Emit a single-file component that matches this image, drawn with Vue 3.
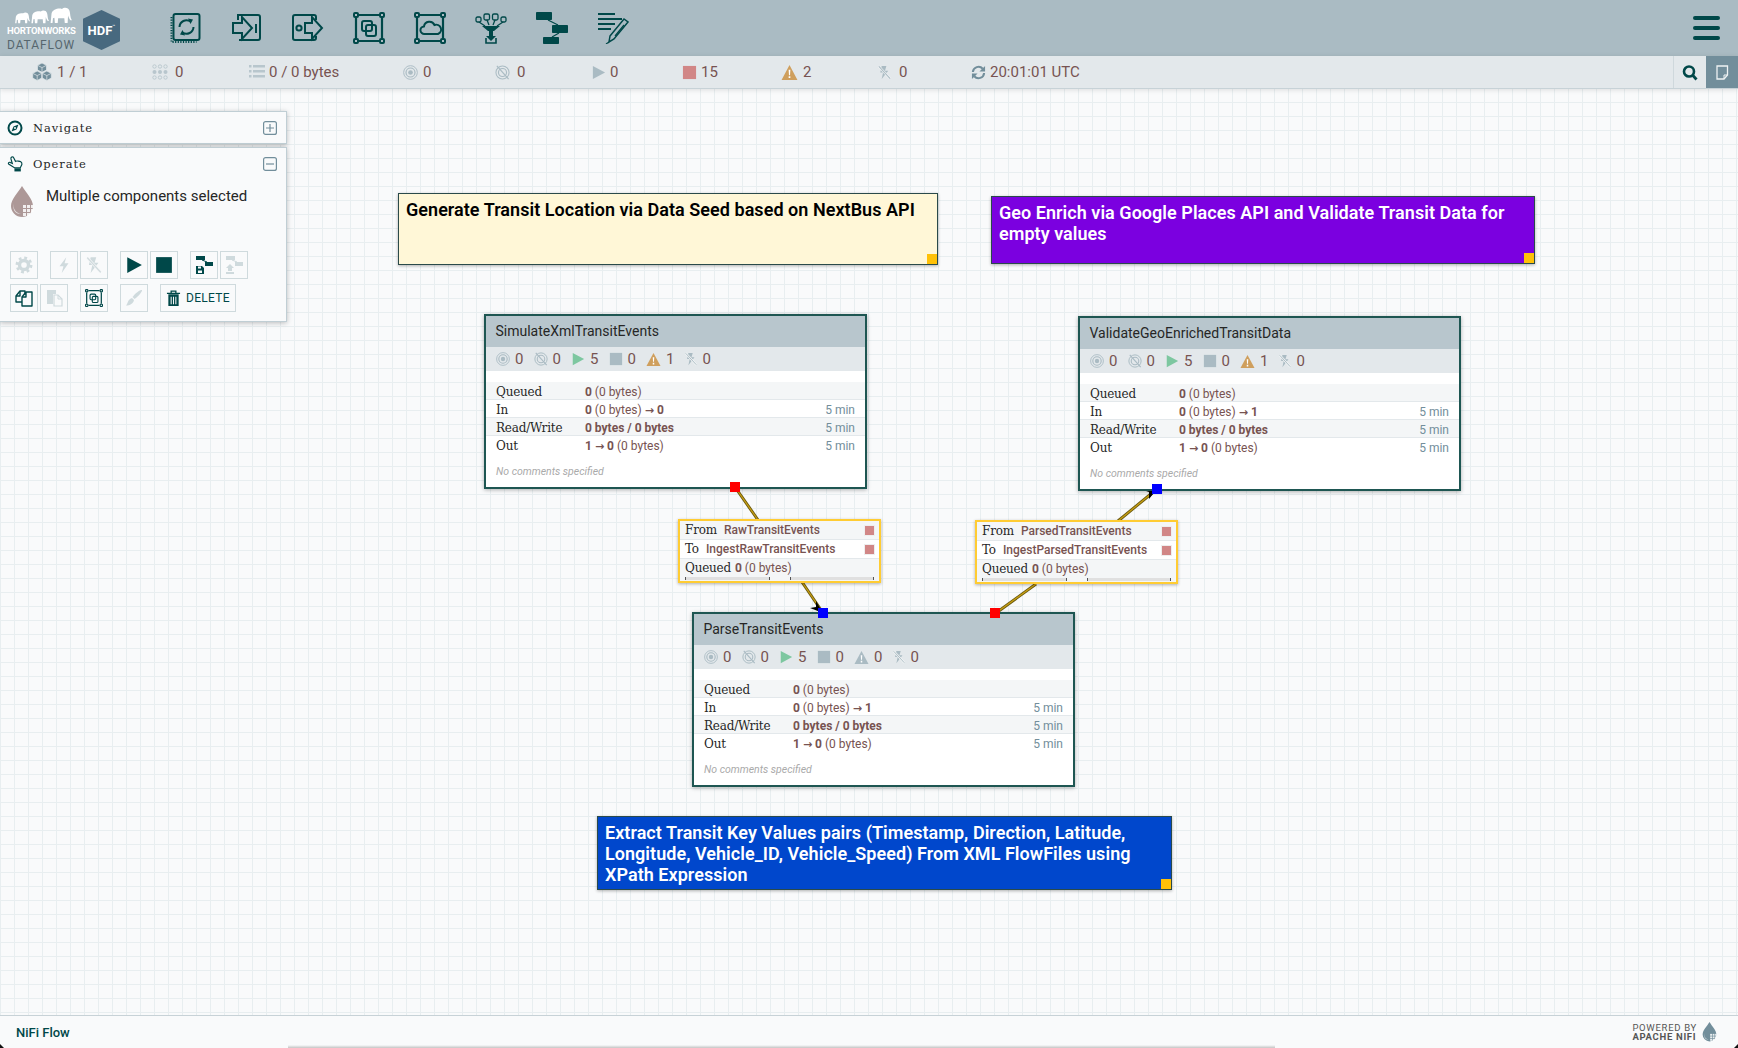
<script setup>
const tools = ['proc', 'inport', 'outport', 'group', 'remote', 'funnel', 'template', 'label']

const statusItems = [
  { icon: 'cubes', text: '1 / 1', w: 120, gap: 5 },
  { icon: 'dots', text: '0', w: 97, gap: 7 },
  { icon: 'list', text: '0 / 0 bytes', w: 154, gap: 4 },
  { icon: 'target', text: '0', w: 92, gap: 5 },
  { icon: 'target-off', text: '0', w: 96, gap: 7 },
  { icon: 'play', text: '0', w: 91, gap: 4 },
  { icon: 'stop', text: '15', w: 99, gap: 4, cls: 'red' },
  { icon: 'warn', text: '2', w: 96, gap: 5, cls: 'warned' },
  { icon: 'bolt-off', text: '0', w: 94, gap: 7 },
  { icon: 'refresh', text: '20:01:01 UTC', w: 160, gap: 4, cls: 'steel' }
]

const labels = [
  { cls: 'l-yellow', text: 'Generate Transit Location via Data Seed based on NextBus API', x: 398, y: 104, w: 540, h: 72 },
  { cls: 'l-purple', text: 'Geo Enrich via Google Places API and Validate Transit Data for empty values', x: 991, y: 107, w: 544, h: 68 },
  { cls: 'l-blue', text: 'Extract Transit Key Values pairs (Timestamp, Direction, Latitude, Longitude, Vehicle_ID, Vehicle_Speed) From XML FlowFiles using XPath Expression', x: 597, y: 727, w: 575, h: 74 }
]

const processors = [
  { name: 'SimulateXmlTransitEvents', x: 484, y: 225, warn: 1, warnCls: 'amber', in: '0', out: '0' },
  { name: 'ValidateGeoEnrichedTransitData', x: 1078, y: 227, warn: 1, warnCls: 'amber', in: '1', out: '0' },
  { name: 'ParseTransitEvents', x: 692, y: 523, warn: 0, warnCls: 'plain', in: '1', out: '0' }
]

const conns = [
  { x: 678, y: 430, from: 'RawTransitEvents', to: 'IngestRawTransitEvents' },
  { x: 975, y: 431, from: 'ParsedTransitEvents', to: 'IngestParsedTransitEvents' }
]

const ports = [
  { x: 730, y: 393, c: 'red' },
  { x: 818, y: 519, c: 'blue' },
  { x: 990, y: 519, c: 'red' },
  { x: 1152, y: 395, c: 'blue' }
]

const row1 = [
  { icon: 'gear', off: true },
  { icon: 'bolt', off: true, sp: true },
  { icon: 'bolt-off', off: true },
  { icon: 'play', sp: true },
  { icon: 'stop' },
  { icon: 'tpl-save', sp: true },
  { icon: 'tpl-up', off: true }
]
const row2 = [
  { icon: 'copy' },
  { icon: 'paste', off: true },
  { icon: 'group', sp: true },
  { icon: 'brush', off: true, sp: true }
]
</script>

<template>
  <div class="page">
    <svg class="defs" aria-hidden="true">
      <defs>
        <symbol id="i-proc" viewBox="0 0 32 32">
          <g fill="none" stroke="currentColor" stroke-width="2">
            <rect x="3.5" y="2" width="26" height="26" rx="2" />
            <path d="M1.5 5v25h25" stroke-dasharray="1.2 1.4" />
            <path d="M9.5 15a7 7 0 0 1 11-5.5" />
            <path d="M23.5 15a7 7 0 0 1-11 5.5" />
          </g>
          <path d="M18 6.5l5 1-2.5 4.5zM15 23.500l-5-1 2.500-4.500z" fill="currentColor" />
        </symbol>
        <symbol id="i-inport" viewBox="0 0 32 32">
          <g fill="none" stroke="currentColor" stroke-width="2">
            <path d="M7 8V3h20a2 2 0 0 1 2 2v21a2 2 0 0 1-2 2H8" />
            <path d="M2 11h9V5l10 11-10 11v-6H2z" />
            <path d="M25 12v9" />
          </g>
        </symbol>
        <symbol id="i-outport" viewBox="0 0 32 32">
          <g fill="none" stroke="currentColor" stroke-width="2">
            <path d="M24 8V5a2 2 0 0 0-2-2H3a2 2 0 0 0-2 2v21a2 2 0 0 0 2 2h19a2 2 0 0 0 2-2v-2" />
            <circle cx="7" cy="16" r="2.6" />
            <path d="M13 11h7V5l10 11-10 11v-6h-7z" />
          </g>
        </symbol>
        <symbol id="i-group" viewBox="0 0 32 32">
          <g fill="none" stroke="currentColor" stroke-width="2">
            <rect x="1" y="1" width="4" height="4" rx="1" />
            <rect x="27" y="1" width="4" height="4" rx="1" />
            <rect x="1" y="27" width="4" height="4" rx="1" />
            <rect x="27" y="27" width="4" height="4" rx="1" />
            <path d="M6 3h20M6 29h20M3 6v20M29 6v20" stroke-width="2.2" />
            <rect x="9" y="9" width="10" height="10" rx="2" />
            <rect x="13" y="13" width="10" height="11" rx="2" />
          </g>
        </symbol>
        <symbol id="i-remote" viewBox="0 0 32 32">
          <g fill="none" stroke="currentColor" stroke-width="2">
            <rect x="1" y="1" width="4" height="4" rx="1" />
            <rect x="27" y="1" width="4" height="4" rx="1" />
            <rect x="1" y="27" width="4" height="4" rx="1" />
            <rect x="27" y="27" width="4" height="4" rx="1" />
            <path d="M6 3h20M6 29h20M3 6v20M29 6v20" stroke-width="2.2" />
            <path d="M10.5 22a3.8 3.8 0 0 1-.5-7.6 5.5 5.5 0 0 1 10.500-1.400 4.500 4.500 0 0 1 3.500 9z" />
          </g>
        </symbol>
        <symbol id="i-funnel" viewBox="0 0 32 32">
          <g fill="none" stroke="currentColor" stroke-width="1.300">
            <rect x="1" y="5" width="5" height="5" rx="1.500" />
            <rect x="9" y="2" width="5.500" height="6" rx="1.500" />
            <rect x="17.500" y="2" width="5.500" height="6" rx="1.500" />
            <rect x="26" y="5" width="5" height="5" rx="1.500" />
            <path d="M4 10l6 4M12 8l2 5M20 8l-2 5M28 10l-6 4" />
            <path d="M11 26v5h10v-5" stroke-width="1.600" />
          </g>
          <path d="M7 14h18l-6 5h-6z" fill="currentColor" />
          <path d="M14 19h4v5h3l-5 5-5-5h3z" fill="currentColor" />
        </symbol>
        <symbol id="i-template" viewBox="0 0 32 32">
          <g fill="currentColor">
            <rect x="0" y="0" width="16" height="8" rx="0.800" />
            <rect x="16" y="13" width="16" height="8" rx="0.800" />
            <rect x="7" y="25" width="16" height="7" rx="0.800" />
          </g>
          <path d="M12 8l10 5M23 21l-7 4" stroke="currentColor" stroke-width="1.200" fill="none" />
        </symbol>
        <symbol id="i-label" viewBox="0 0 32 32">
          <g fill="none" stroke="currentColor">
            <path d="M1 2h17M1 7h24M1 12h17M1 17h13" stroke-width="2.200" />
            <path d="M13 24L27 7l4 3-14 17-5 3z" stroke-width="1.500" />
            <path d="M18 24l9-11M12 30l-3 2" stroke-width="1.200" />
          </g>
        </symbol>

        <symbol id="i-cubes" viewBox="0 0 20 20">
          <g fill="currentColor" stroke="#e3e8eb" stroke-width="0.700">
            <path d="M10 1l4.500 2.300v4.700L10 10.300 5.500 8V3.300z" />
            <path d="M5.200 9l4.500 2.300V16l-4.500 2.500L.7 16v-4.700z" />
            <path d="M14.800 9l4.500 2.300V16l-4.500 2.500-4.500-2.500v-4.700z" />
          </g>
          <path d="M5.500 3.300L10 5.600l4.500-2.300M10 5.600V10M.7 11.300l4.500 2.300 4.500-2.300M5.200 13.600v4.900M10.300 11.300l4.500 2.300 4.500-2.300M14.800 13.600v4.900" fill="none" stroke="#e3e8eb" stroke-width="0.700" />
        </symbol>
        <symbol id="i-dots" viewBox="0 0 16 16">
          <g fill="none" stroke="currentColor" stroke-width="0.900">
            <circle cx="2.500" cy="2.500" r="1.700" /><circle cx="8" cy="2.500" r="1.700" /><circle cx="13.500" cy="2.500" r="1.700" />
            <circle cx="2.500" cy="13.500" r="1.700" /><circle cx="8" cy="13.500" r="1.700" /><circle cx="13.500" cy="13.500" r="1.700" />
          </g>
          <g fill="currentColor">
            <circle cx="2.500" cy="8" r="2" /><circle cx="8" cy="8" r="2" /><circle cx="13.500" cy="8" r="2" />
          </g>
        </symbol>
        <symbol id="i-list" viewBox="0 0 16 16">
          <g fill="currentColor">
            <rect x="0" y="1" width="2.500" height="2.500" /><rect x="4" y="1" width="12" height="2.500" />
            <rect x="0" y="6" width="2.500" height="2.500" /><rect x="4" y="6" width="12" height="2.500" />
            <rect x="0" y="11" width="2.500" height="2.500" /><rect x="4" y="11" width="12" height="2.500" />
          </g>
        </symbol>
        <symbol id="i-target" viewBox="0 0 16 16">
          <g fill="none" stroke="currentColor">
            <circle cx="8" cy="8" r="7.300" stroke-width="1" />
            <circle cx="8" cy="8" r="4.800" stroke-width="1.300" />
          </g>
          <circle cx="8" cy="8" r="2.500" fill="currentColor" />
        </symbol>
        <symbol id="i-target-off" viewBox="0 0 16 16">
          <g fill="none" stroke="currentColor">
            <circle cx="8" cy="8" r="7" stroke-width="1.100" />
            <circle cx="8" cy="8" r="4.300" stroke-width="1.200" />
            <path d="M2 1l12.500 14" stroke-width="1.300" />
          </g>
        </symbol>
        <symbol id="i-play" viewBox="0 0 16 16"><path d="M2 1l13 7-13 7z" fill="currentColor" /></symbol>
        <symbol id="i-stop" viewBox="0 0 16 16"><rect x="1" y="1" width="14" height="14" fill="currentColor" /></symbol>
        <symbol id="i-warn" viewBox="0 0 16 16">
          <path d="M8 1l7.500 14H.5z" fill="currentColor" />
          <path d="M7.200 5.500h1.600l-.3 5h-1zM7.200 11.500h1.600v1.700H7.200z" fill="#fff" />
        </symbol>
        <symbol id="i-bolt-off" viewBox="0 0 16 16">
          <path d="M5 1L3.500 8h3L5 15l7-9H8.500L10 1z" fill="currentColor" />
          <path d="M2 1.500l12 13" stroke="#f3f5f6" stroke-width="2.400" fill="none" />
          <path d="M2 1.500l12 13" stroke="currentColor" stroke-width="1.100" fill="none" />
        </symbol>
        <symbol id="i-bolt" viewBox="0 0 16 16"><path d="M10 1L4 9h3.500L6 15l6-8.500H8.500z" fill="currentColor" /></symbol>
        <symbol id="i-refresh" viewBox="0 0 16 16">
          <g fill="none" stroke="currentColor" stroke-width="2.200">
            <path d="M2 7.500A6 6 0 0 1 12.500 4" />
            <path d="M14 8.500A6 6 0 0 1 3.500 12" />
          </g>
          <path d="M15 1v6h-6zM1 15V9h6z" fill="currentColor" />
        </symbol>
        <symbol id="i-search" viewBox="0 0 16 16">
          <circle cx="7" cy="7" r="5" fill="none" stroke="currentColor" stroke-width="2.600" />
          <path d="M10.500 10.500l4 4.500" stroke="currentColor" stroke-width="2.800" />
        </symbol>
        <symbol id="i-note" viewBox="0 0 16 16">
          <path d="M3 1.500h10.500v9L10 14.500H3z" fill="none" stroke="currentColor" stroke-width="1.300" />
          <path d="M13.500 10.500H10v4" fill="none" stroke="currentColor" stroke-width="1" />
        </symbol>
        <symbol id="i-compass" viewBox="0 0 16 16">
          <circle cx="8" cy="8" r="6.500" fill="none" stroke="currentColor" stroke-width="2" />
          <path d="M11.500 4.500L9.500 9.500 4.500 11.500 6.500 6.500z" fill="currentColor" />
          <circle cx="8" cy="8" r="1" fill="#f9fafb" />
        </symbol>
        <symbol id="i-hand" viewBox="0 0 16 16">
          <path d="M4.500 1.500c1-.6 1.600.2 2 1l1.500 3c1-.5 4-.3 5 .3 1 .6 1.200 1.600 1 2.700L12.500 11.500H7L1.500 8c-.7-1 .4-2 1.500-1.500L5 7.500 3.700 3.200c-.2-.7.2-1.300.8-1.700z" fill="none" stroke="currentColor" stroke-width="1.100" />
          <rect x="7" y="12" width="6" height="3" fill="currentColor" />
        </symbol>
        <symbol id="i-drop" viewBox="0 0 24 32">
          <path d="M12 0c4 7 11 13 11 20a11 11 0 0 1-22 0C1 13 8 7 12 0z" fill="currentColor" />
          <path d="M4 17c-1.500 5 1.500 10 7 11-6 .5-9-5-7-11z" fill="#fff" opacity="0.700" />
          <g fill="#fff" opacity="0.850">
            <rect x="13" y="19" width="3" height="3" /><rect x="17" y="19" width="3" height="3" />
            <rect x="13" y="23" width="3" height="3" /><rect x="17" y="23" width="3" height="3" />
            <rect x="21" y="19" width="2.500" height="3" /><rect x="21" y="23" width="2.500" height="3" />
            <rect x="13" y="27" width="3" height="3" /><rect x="17" y="27" width="3" height="3" />
          </g>
        </symbol>
        <symbol id="i-gear" viewBox="0 0 16 16">
          <circle cx="8" cy="8" r="4" fill="none" stroke="currentColor" stroke-width="3" />
          <circle cx="8" cy="8" r="6.300" fill="none" stroke="currentColor" stroke-width="2.400" stroke-dasharray="2.500 2.450" />
        </symbol>
        <symbol id="i-tpl-save" viewBox="0 0 18 18">
          <g fill="currentColor">
            <rect x="1" y="0" width="9" height="4" />
            <rect x="10" y="6" width="8" height="4" />
          </g>
          <path d="M7 4l5 2" stroke="currentColor" stroke-width="1" />
          <path d="M1 10h6l2 2v6H1z" fill="currentColor" />
          <rect x="3" y="10.500" width="3" height="2" fill="#f9fafb" />
          <rect x="3" y="14.500" width="4" height="2.500" fill="#f9fafb" />
        </symbol>
        <symbol id="i-tpl-up" viewBox="0 0 18 18">
          <g fill="currentColor">
            <rect x="1" y="0" width="9" height="4" />
            <rect x="10" y="6" width="8" height="4" />
            <path d="M5 8l4 4H7v3H3v-3H1z" />
            <rect x="1" y="16" width="8" height="2" />
          </g>
          <path d="M7 4l5 2" stroke="currentColor" stroke-width="1" />
        </symbol>
        <symbol id="i-copy" viewBox="0 0 18 18">
          <g fill="none" stroke="currentColor" stroke-width="1.400" stroke-linejoin="round">
            <path d="M7 13H1V7l4-5h5v4" />
            <path d="M5 2v5H1" />
            <path d="M7 8l4-5h6v14H7z" />
            <path d="M11 3v5H7" />
          </g>
        </symbol>
        <symbol id="i-paste" viewBox="0 0 18 18">
          <path d="M2 1h9v4H8v10H2z" fill="currentColor" />
          <path d="M9 6h4l4 4v7H9z" fill="none" stroke="currentColor" stroke-width="1.200" />
          <path d="M13 6v4h4" fill="none" stroke="currentColor" stroke-width="1" />
        </symbol>
        <symbol id="i-brush" viewBox="0 0 18 18">
          <path d="M17 1c.5 2-5 7.500-7.500 9L7.500 8c1.500-2.500 7.500-8 9.500-7z" fill="currentColor" />
          <path d="M7 9l2 2c-.5 3.500-4 5.500-8 5.500 2-1.500 1-5.500 6-7.500z" fill="currentColor" />
        </symbol>
        <symbol id="i-trash" viewBox="0 0 16 18">
          <path d="M1 3.500h14M5.500 3V1.200h5V3" fill="none" stroke="currentColor" stroke-width="1.400" />
          <path d="M2.500 4.500h11V17h-11z" fill="currentColor" />
          <path d="M5.500 7v8M8 7v8M10.500 7v8" stroke="#f9fafb" stroke-width="1.100" />
        </symbol>
        <symbol id="i-elephant" viewBox="0 0 24 18">
          <path d="M2 7C3 2.500 9 1 13 2c2-2 7-2 8 2 1 3 .5 7 2.500 10H22c-1.500-1.500-2-3.500-2.500-5L19 17h-3l-.5-5H9l-.5 5h-3L5 11.500 3.500 12 3 17H1z" fill="currentColor" />
        </symbol>
      </defs>
    </svg>

    <header class="topbar">
      <div class="logo">
        <div class="logo-text">
          <div class="herd">
            <svg class="el el-a"><use href="#i-elephant" /></svg>
            <svg class="el el-b"><use href="#i-elephant" /></svg>
            <svg class="el el-c"><use href="#i-elephant" /></svg>
          </div>
          <div class="hw">HORTONWORKS</div>
          <div class="df">DATAFLOW</div>
        </div>
        <div class="hex"><span>HDF</span><sup>™</sup></div>
      </div>
      <nav class="tools">
        <svg v-for="t in tools" :key="t" class="tool"><use :href="'#i-' + t" /></svg>
      </nav>
      <div class="burger"><i></i><i></i><i></i></div>
    </header>

    <div class="statusbar">
      <div class="stats">
        <div v-for="s in statusItems" :key="s.icon" class="stat" :class="s.cls" :style="{ width: s.w + 'px', gap: s.gap + 'px' }">
          <svg class="stat-ic" :class="'ic-' + s.icon"><use :href="'#i-' + s.icon" /></svg>
          <span>{{ s.text }}</span>
        </div>
      </div>
      <div class="status-actions">
        <div class="search"><svg><use href="#i-search" /></svg></div>
        <div class="note"><svg><use href="#i-note" /></svg></div>
      </div>
    </div>

    <main class="canvas">
      <svg class="links" width="1738" height="927">
        <g fill="none">
          <g stroke="#6b5a10" stroke-width="3">
            <path d="M735 398L758 431M802 493L823 524M996 524L1036 495M1118 432L1157 400" />
          </g>
          <g stroke="#c9a012" stroke-width="1.200">
            <path d="M735 398L758 431M802 493L823 524M996 524L1036 495M1118 432L1157 400" />
          </g>
        </g>
        <path d="M823 524l-13-5 6-1 0-6z" fill="#000" />
        <path d="M1157 400l-14 1 6 2 0 7z" fill="#000" />
      </svg>

      <div v-for="l in labels" :key="l.cls" class="note-label" :class="l.cls" :style="{ left: l.x + 'px', top: l.y + 'px', width: l.w + 'px', height: l.h + 'px' }">
        {{ l.text }}
        <i class="grip"></i>
      </div>

      <section v-for="p in processors" :key="p.name" class="proc" :style="{ left: p.x + 'px', top: p.y + 'px' }">
        <div class="proc-title">{{ p.name }}</div>
        <div class="proc-stats">
          <div class="ps"><svg class="ps-ic soft"><use href="#i-target" /></svg>0</div>
          <div class="ps"><svg class="ps-ic soft"><use href="#i-target-off" /></svg>0</div>
          <div class="ps"><svg class="ps-ic green"><use href="#i-play" /></svg>5</div>
          <div class="ps"><svg class="ps-ic block"><use href="#i-stop" /></svg>0</div>
          <div class="ps"><svg class="ps-ic" :class="p.warnCls"><use href="#i-warn" /></svg>{{ p.warn }}</div>
          <div class="ps"><svg class="ps-ic soft"><use href="#i-bolt-off" /></svg>0</div>
        </div>
        <div class="proc-rows">
          <div class="row alt"><span class="k">Queued</span><span class="v"><b>0</b> (0 bytes)</span></div>
          <div class="row"><span class="k">In</span><span class="v"><b>0</b> (0 bytes) <b class="arrow">→</b> <b>{{ p.in }}</b></span><span class="t">5 min</span></div>
          <div class="row alt"><span class="k">Read/Write</span><span class="v"><b>0 bytes / 0 bytes</b></span><span class="t">5 min</span></div>
          <div class="row"><span class="k">Out</span><span class="v"><b>1 <span class="arrow">→</span> {{ p.out }}</b> (0 bytes)</span><span class="t">5 min</span></div>
        </div>
        <div class="comments">No comments specified</div>
      </section>

      <section v-for="c in conns" :key="c.from" class="conn" :style="{ left: c.x + 'px', top: c.y + 'px' }">
        <div class="c-row alt"><span class="k">From</span><span class="name">{{ c.from }}</span><i class="sq"></i></div>
        <div class="c-row"><span class="k">To</span><span class="name">{{ c.to }}</span><i class="sq"></i></div>
        <div class="c-row alt last">
          <span class="k">Queued</span><span class="v"><b>0</b> (0 bytes)</span>
          <div class="bars"><i></i><i></i></div>
        </div>
      </section>

      <i v-for="(o, n) in ports" :key="n" class="port" :class="o.c" :style="{ left: o.x + 'px', top: o.y + 'px' }"></i>

      <aside class="panels">
        <div class="panel nav-panel">
          <svg class="panel-ic"><use href="#i-compass" /></svg>
          <span class="panel-title">Navigate</span>
          <span class="toggle">
            <svg viewBox="0 0 14 14"><rect x=".6" y=".6" width="12.800" height="12.800" rx="2" /><path d="M3 7h8M7 3v8" /></svg>
          </span>
        </div>
        <div class="panel op-panel">
          <div class="op-head">
            <svg class="panel-ic hand"><use href="#i-hand" /></svg>
            <span class="panel-title">Operate</span>
            <span class="toggle">
              <svg viewBox="0 0 14 14"><rect x=".6" y=".6" width="12.800" height="12.800" rx="2" /><path d="M3 7h8" /></svg>
            </span>
          </div>
          <div class="selection">
            <svg class="sel-drop"><use href="#i-drop" /></svg>
            <span>Multiple components selected</span>
          </div>
          <div class="btn-row">
            <button v-for="b in row1" :key="b.icon" class="btn" :class="{ off: b.off, sp: b.sp }"><svg><use :href="'#i-' + b.icon" /></svg></button>
          </div>
          <div class="btn-row">
            <button v-for="b in row2" :key="b.icon" class="btn" :class="{ off: b.off, sp: b.sp }"><svg><use :href="'#i-' + b.icon" /></svg></button>
            <button class="btn del"><svg class="trash"><use href="#i-trash" /></svg>DELETE</button>
          </div>
        </div>
      </aside>
    </main>

    <footer class="foot">
      <span class="crumb">NiFi Flow</span>
      <div class="powered">
        <div class="pw"><div>POWERED BY</div><div class="an">APACHE NIFI</div></div>
        <svg class="foot-drop"><use href="#i-drop" /></svg>
      </div>
      <i class="edge"></i>
      <i class="corner c-l"></i>
      <i class="corner c-r"></i>
    </footer>
  </div>
</template>

<style>
html, body { margin: 0; padding: 0; overflow: hidden; }
</style>

<style scoped>
.page {
  width: 1738px;
  height: 1048px;
  display: flex;
  flex-direction: column;
  overflow: hidden;
  font-family: Roboto, "Liberation Sans", sans-serif;
  background: #f9fafb;
  color: #262626;
}
.defs { position: absolute; width: 0; height: 0; }

/* top bar */
.topbar {
  height: 56px;
  flex: none;
  background: #aabbc3;
  display: flex;
  align-items: center;
  padding: 0 18px 0 7px;
  color: #004849;
}
.logo { display: flex; align-items: center; width: 163px; gap: 6px; flex: none; }
.logo-text { width: 70px; display: flex; flex-direction: column; align-items: stretch; padding-top: 2px; }
.herd { height: 17px; display: flex; align-items: flex-end; color: #fff; padding-left: 7px; }
.el { display: block; }
.el-a { width: 17px; height: 12px; }
.el-b { width: 20px; height: 14px; margin-left: -1px; }
.el-c { width: 24px; height: 17px; margin-left: -1px; }
.hw { font-size: 9.500px; font-weight: 700; color: #fff; line-height: 11px; white-space: nowrap; letter-spacing: -0.200px; margin-top: 1px; }
.df { font-size: 12px; line-height: 14px; letter-spacing: 0.900px; color: #56666e; margin-top: 2px; white-space: nowrap; }
.hex {
  width: 37px;
  height: 40px;
  background: #48697f;
  clip-path: polygon(50% 0, 100% 22%, 100% 78%, 50% 100%, 0 78%, 0 22%);
  color: #fff;
  font-size: 13px;
  font-weight: 700;
  display: flex;
  align-items: center;
  justify-content: center;
  margin-top: 4px;
}
.hex sup { font-size: 5px; margin-top: -8px; font-weight: 400; }
.tools { display: flex; gap: 29px; }
.tool { width: 32px; height: 32px; display: block; color: #004849; }
.burger { margin-left: auto; width: 27px; display: flex; flex-direction: column; gap: 6px; }
.burger i { display: block; height: 4px; border-radius: 2px; background: #004849; }

/* status bar */
.statusbar {
  height: 33px;
  flex: none;
  box-sizing: border-box;
  background: #e3e8eb;
  border-bottom: 1px solid #c7d2d7;
  box-shadow: 0 1px 5px rgba(0, 0, 0, .12);
  display: flex;
  position: relative;
  z-index: 2;
}
.stats { display: flex; padding-left: 32px; flex: 1; }
.stat {
  display: flex;
  align-items: center;
  font-size: 15px;
  color: #775351;
  white-space: nowrap;
}
.stat-ic { width: 15px; height: 15px; color: #aabbc3; flex: none; }
.ic-cubes { width: 20px; height: 20px; color: #728e9b; }
.ic-dots, .ic-list { color: #b8c6cd; width: 16px; height: 16px; }
.red .stat-ic { color: #d18686; }
.warned .stat-ic { color: #cf9f5d; width: 17px; height: 17px; }
.steel .stat-ic { color: #728e9b; }
.status-actions { display: flex; }
.search {
  width: 32px;
  border-left: 1px solid #cfd8dc;
  display: flex;
  align-items: center;
  justify-content: center;
  color: #004849;
}
.search svg { width: 16px; height: 17px; }
.note {
  width: 32px;
  background: #728e9b;
  display: flex;
  align-items: center;
  justify-content: center;
  color: #eef2f3;
}
.note svg { width: 16px; height: 17px; }

/* canvas */
.canvas {
  flex: 1;
  position: relative;
  overflow: hidden;
  background-color: #f9fafb;
  background-image:
    linear-gradient(to right, #e8eef0 1px, transparent 1px),
    linear-gradient(to bottom, #e8eef0 1px, transparent 1px);
  background-size: 14px 14px;
  background-position: 0 13px;
}
.links { position: absolute; left: 0; top: 0; }

.note-label {
  position: absolute;
  box-sizing: border-box;
  padding: 5px 7px;
  border: 1px solid #2a4a4a;
  box-shadow: 0 1px 3px rgba(0, 0, 0, .3);
  font-size: 18px;
  line-height: 21px;
  font-weight: 600;
  letter-spacing: 0.040px;
}
.l-yellow { background: #fff7d7; color: #000; }
.l-purple { background: #7b00e0; color: #fff; }
.l-blue { background: #0047cc; color: #fff; }
.grip {
  position: absolute;
  right: 0;
  bottom: 0;
  width: 10px;
  height: 10px;
  background: #ffc107;
}

.proc {
  position: absolute;
  box-sizing: border-box;
  width: 383px;
  height: 175px;
  border: 2px solid #1e5652;
  background: #fff;
  box-shadow: 0 1px 4px rgba(0, 0, 0, .3);
}
.proc-title {
  height: 31px;
  line-height: 31px;
  background: #b8c6cd;
  padding-left: 9.500px;
  font-size: 14px;
  color: #262626;
}
.proc-stats {
  height: 24px;
  background: #e3e8eb;
  display: flex;
  align-items: center;
  padding-left: 10px;
  font-size: 15px;
  color: #775351;
}
.ps { width: 37.500px; display: flex; align-items: center; gap: 5px; flex: none; }
.ps-ic { width: 14px; height: 14px; flex: none; }
.soft { color: #aabbc3; }
.green { color: #7dc7a0; }
.block { color: #aabbc3; }
.amber { color: #cf9f5d; }
.plain { color: #aabbc3; }
.proc .amber, .proc .plain { width: 15px; height: 15px; }
.proc-rows { margin-top: 11px; }
.row {
  height: 18px;
  display: flex;
  align-items: center;
  padding: 2px 10px 0;
  font-size: 12px;
  border-bottom: 1px solid #e3e8eb;
  box-sizing: border-box;
}
.row:last-child { border-bottom: 0; }
.alt { background: #f4f6f7; }
.k {
  font-family: "DejaVu Serif", "Liberation Serif", serif;
  font-size: 12px;
  letter-spacing: -0.200px;
  color: #262626;
  white-space: nowrap;
}
.row .k { width: 89px; flex: none; }
.v { color: #775351; white-space: nowrap; }
.v b { font-weight: 700; }
.arrow { font-family: "DejaVu Sans", sans-serif; font-size: 11px; font-weight: 700; }
.t { margin-left: auto; color: #728e9b; }
.comments {
  margin: 11px 0 0 10px;
  font-size: 10.500px;
  font-style: italic;
  color: #aaa;
}

.conn {
  position: absolute;
  box-sizing: border-box;
  width: 203px;
  border: 2px solid #ffcc33;
  background: #fff;
  box-shadow: 0 1px 3px rgba(0, 0, 0, .3);
}
.c-row {
  height: 19px;
  display: flex;
  align-items: center;
  padding: 0 5px;
  font-size: 12px;
  border-bottom: 1px solid #e3e8eb;
  box-sizing: border-box;
  position: relative;
}
.c-row.last { height: 22px; border-bottom: 0; padding-bottom: 4px; }
.c-row .k { margin-right: 7px; }
.c-row.last .k { margin-right: 4px; }
.name { color: #775351; font-weight: 500; white-space: nowrap; }
.sq { margin-left: auto; width: 9px; height: 9px; background: #d18686; box-shadow: 0 0 0 1px #eee; margin-right: 0; }
.bars {
  position: absolute;
  left: 5px;
  right: 5px;
  bottom: 1px;
  display: flex;
  gap: 20px;
}
.bars i {
  flex: 1;
  height: 3px;
  background: #e0e0e0;
  border-left: 1px solid #555;
  border-right: 1px solid #555;
}

.port { position: absolute; width: 10px; height: 10px; }
.port.red { background: #ff0000; }
.port.blue { background: #0000ff; }

/* panels */
.panels {
  position: absolute;
  left: 0;
  top: 22px;
  width: 287px;
  display: flex;
  flex-direction: column;
  gap: 3px;
}
.panel {
  box-sizing: border-box;
  background: #f9fafb;
  border: 1px solid #c0ced4;
  border-left: 0;
  box-shadow: 0 1px 5px rgba(0, 0, 0, .25);
}
.nav-panel {
  height: 33px;
  display: flex;
  align-items: center;
  padding: 0 9px 0 7px;
}
.op-panel { height: 175px; padding: 0 9px 0 0; }
.op-head { height: 31px; padding-left: 7px; display: flex; align-items: center; }
.panel-ic { width: 16px; height: 16px; color: #004849; flex: none; }
.panel-ic.hand { width: 17px; height: 18px; margin-right: -1px; }
.panel-title {
  margin-left: 10px;
  font-family: "DejaVu Serif", serif;
  font-size: 11.500px;
  letter-spacing: 0.900px;
  color: #262626;
}
.toggle { margin-left: auto; width: 14px; height: 14px; display: block; }
.toggle svg { display: block; width: 14px; height: 14px; fill: none; stroke: #728e9b; stroke-width: 1.200; }
.selection {
  height: 72px;
  box-sizing: border-box;
  padding: 7px 0 0 10px;
  display: flex;
  align-items: flex-start;
  font-size: 15px;
  color: #262626;
}
.sel-drop { width: 24px; height: 32px; color: #ad9897; flex: none; margin-right: 12px; }
.selection span { line-height: 20px; }
.btn-row { display: flex; gap: 2px; padding-left: 10px; margin-bottom: 5px; }
.btn {
  box-sizing: border-box;
  width: 28px;
  height: 28px;
  padding: 0;
  border: 1px solid #cfdadd;
  background: transparent;
  color: #004849;
  display: flex;
  align-items: center;
  justify-content: center;
  font-family: Roboto, sans-serif;
}
.btn svg { width: 18px; height: 18px; display: block; }
.btn.sp { margin-left: 10px; }
.btn.off { color: #cfdadd; }
.btn.del {
  width: 76px;
  margin-left: 10px;
  gap: 5px;
  font-size: 12px;
  letter-spacing: 0.300px;
  color: #004849;
}
.btn .trash { width: 15px; height: 17px; }

/* footer */
.foot {
  height: 33px;
  flex: none;
  box-sizing: border-box;
  border-top: 1px solid #c7d2d7;
  background: #f9fafb;
  display: flex;
  align-items: center;
  padding: 0 21px 0 16px;
  position: relative;
}
.crumb { font-size: 13px; font-weight: 500; color: #004849; }
.powered { margin-left: auto; display: flex; align-items: center; gap: 5px; }
.pw { font-size: 9.500px; line-height: 9.500px; letter-spacing: 0.700px; color: #555; white-space: nowrap; }
.an { font-weight: 700; }
.foot-drop { width: 15px; height: 20px; color: #728e9b; }
.edge {
  position: absolute;
  left: 288px;
  width: 987px;
  bottom: 0;
  height: 3px;
  background: linear-gradient(to bottom, transparent, #c4c4c4);
}
.corner { position: absolute; bottom: 0; width: 4px; height: 4px; background: #111; }
.c-l { left: 0; clip-path: polygon(0 0, 100% 100%, 0 100%); }
.c-r { right: 0; clip-path: polygon(100% 0, 100% 100%, 0 100%); }
</style>
